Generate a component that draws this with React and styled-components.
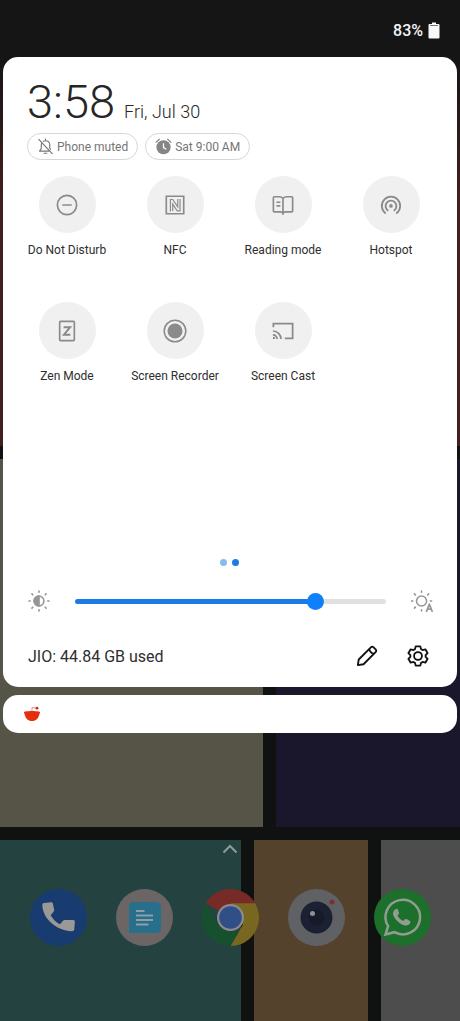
import React, { useState } from "react";
import styled, { createGlobalStyle } from "styled-components";

const Global = createGlobalStyle`
  *, *::before, *::after { box-sizing: border-box; }
  body { margin: 0; background: #141414; font-family: Roboto, "Noto Sans", sans-serif; color: #2e2e2e; }
  svg { display: block; }
`;

const PlainButton = styled.button`
  margin: 0;
  padding: 0;
  border: 0;
  background: none;
  color: inherit;
  font: inherit;
  cursor: pointer;
`;

const Screen = styled.div`
  display: grid;
  grid-template: minmax(100vh, auto) / minmax(0, 1fr);
`;

const Layer = styled.div`
  grid-area: 1 / 1;
  display: flex;
  flex-direction: column;
`;

const Wallpaper = styled.div`
  grid-area: 1 / 1;
  display: grid;
  grid-template-rows: 446fr 368fr 181fr;
  gap: 13px;
  background: #101111;
`;

const WallRow = styled.div`
  display: grid;
  grid-template-columns: ${(p) => p.$columns};
  gap: 13px;
`;

const WallTile = styled.div`
  background: ${(p) => p.$fill};
`;

const StatusBar = styled.header`
  display: flex;
  justify-content: flex-end;
  align-items: center;
  gap: 5px;
  height: 57px;
  padding: 4px 20px 0 0;
  color: #f4f4f4;
  font-size: 16px;
  font-weight: 500;
`;

const Panel = styled.main`
  margin: 0 3px;
  padding: 20px 12px 13px 10px;
  border-radius: 15px;
  background: #fff;
`;

const Clock = styled.div`
  display: flex;
  align-items: baseline;
  gap: 9px;
  height: 56px;
  padding-left: 14px;
  color: #262626;
  font-weight: 300;
`;

const Time = styled.time`
  font-size: 47px;
  line-height: 50px;
`;

const DateText = styled.span`
  font-size: 18px;
`;

const Pills = styled.div`
  display: flex;
  gap: 7px;
  padding-left: 14px;
`;

const Pill = styled(PlainButton)`
  display: flex;
  align-items: center;
  gap: 3px;
  height: 27px;
  padding: 0 9px;
  border: 1px solid #d6d6d6;
  border-radius: 14px;
  color: #757575;
  font-size: 12px;
`;

const Tiles = styled.div`
  display: grid;
  grid-template-columns: repeat(4, 1fr);
  grid-auto-rows: 126px;
  align-content: start;
  min-height: 397px;
  padding-top: 16px;
`;

const Tile = styled(PlainButton)`
  display: flex;
  flex-direction: column;
  align-items: center;
  gap: 9px;
  font-size: 12px;
  line-height: 16px;
`;

const TileDisc = styled.span`
  display: grid;
  place-items: center;
  width: 57px;
  height: 57px;
  border-radius: 50%;
  background: #f0f0f0;
  color: #8a8a8a;
`;

const Dots = styled.div`
  display: flex;
  justify-content: center;
  gap: 5px;
  padding-top: 2px;
`;

const Dot = styled.span`
  width: 7px;
  height: 7px;
  border-radius: 50%;
  background: ${(p) => (p.$on ? "#1a7be0" : "#84bdec")};
`;

const BrightnessRow = styled.div`
  display: flex;
  align-items: center;
  height: 36px;
  margin-top: 17px;
  padding: 0 12px 0 15px;
  color: #969696;
`;

const Slider = styled.input`
  flex: 1;
  min-width: 0;
  height: 17px;
  margin: 0 25px;
  appearance: none;
  background: transparent;
  &::-webkit-slider-runnable-track {
    height: 5px;
    border-radius: 3px;
    background: linear-gradient(to right, #1a7be6 var(--fill), #e0e0e0 var(--fill));
  }
  &::-webkit-slider-thumb {
    appearance: none;
    width: 17px;
    height: 17px;
    margin-top: -6px;
    border-radius: 50%;
    background: #0d80fa;
  }
`;

const Footer = styled.footer`
  display: flex;
  align-items: center;
  gap: 29px;
  height: 36px;
  margin-top: 19px;
  padding: 0 16px 0 15px;
  color: #111;
`;

const Usage = styled.span`
  flex: 1;
  font-size: 16px;
  color: #2e2e2e;
`;

const Notification = styled.section`
  display: flex;
  align-items: center;
  height: 38px;
  margin: 8px 3px 0;
  padding-left: 20px;
  border-radius: 15px;
  background: #fff;
`;

const Dock = styled.nav`
  display: grid;
  grid-template-columns: repeat(5, 1fr);
  justify-items: center;
  margin-top: auto;
  padding: 0 15px 75px;
`;

const DrawerButton = styled(PlainButton)`
  grid-column: 1 / -1;
  margin-bottom: 35px;
  color: #8f9c9a;
`;

const Line = ({ size = 22, w = 2, children }) => (
  <svg width={size} height={size} viewBox="0 0 24 24" fill="none" stroke="currentColor" strokeWidth={w} strokeLinejoin="round" strokeLinecap="round" aria-hidden="true">
    {children}
  </svg>
);

const tiles = [
  ["Do Not Disturb", <Line key="d" w={1.8}><circle cx="12" cy="12" r="10.5" /><path d="M7.5 12h9" /></Line>],
  ["NFC", <Line key="n" w={1.8}><path d="M2.5 2.5h19v19h-19z" strokeLinejoin="miter" /><path d="M7 19V6h2.500l5.500 8V5.500M9.500 18.500V11l5 7.500h3V5.500" strokeWidth="1.300" strokeLinejoin="miter" strokeLinecap="butt" /></Line>],
  ["Reading mode", <Line key="r" w={1.8}><path d="M12 5C11 3.500 9.500 3 8 3H2.500a1 1 0 0 0-1 1v14.500a1 1 0 0 0 1 1H9c1.500 0 2.500.3 3 1.500.5-1.200 1.500-1.500 3-1.500h6.500a1 1 0 0 0 1-1V4a1 1 0 0 0-1-1H16C14.500 3 13 3.500 12 5zM12 5v17M5.500 9h3M5.500 13h3" /></Line>],
  ["Hotspot", <Line key="h" w={2}><circle cx="12" cy="13" r="2" fill="currentColor" stroke="none" /><path d="M5.700 20.700a10 10 0 1 1 12.600 0M8.300 17.800a5.900 5.900 0 1 1 7.400 0" /></Line>],
  ["Zen Mode", <Line key="z" w={1.8}><rect x="4" y="1.500" width="16" height="21" rx="1" /><path d="M8.300 8h7l-6.600 8h7" strokeWidth="2.200" strokeLinejoin="miter" strokeLinecap="butt" /></Line>],
  ["Screen Recorder", <Line key="s" size={24} w={1.5}><circle cx="12" cy="12" r="10.800" /><circle cx="12" cy="12" r="7.500" fill="currentColor" stroke="none" /></Line>],
  ["Screen Cast", <Line key="c" w={1.9}><path d="M1.500 8V4h21v16H14M1 16.200a4.600 4.600 0 0 1 4.600 4.600M1 12a8.800 8.800 0 0 1 8.800 8.800" strokeLinejoin="miter" strokeLinecap="butt" /><path d="M1 18.300a2.500 2.500 0 0 1 2.500 2.500H1z" fill="currentColor" stroke="none" /></Line>],
];

const BellOff = () => (
  <Line size={17} w={1.6}>
    <path d="M6.500 7.500C5.800 9 6 11 6 15l-2.500 3.500H17M9 4.800c1-.8 1.500-1 3-1 3.500 0 6 2.500 6 6V14l1 2M10 21.500h4M12 1.500v2M2.500 2l19 20" />
  </Line>
);

const Alarm = () => (
  <svg width="17" height="17" viewBox="0 0 24 24" fill="none" aria-hidden="true">
    <circle cx="12" cy="13" r="10" fill="#858585" />
    <path d="M1 6.500 6.500 1.500M23 6.500 17.500 1.500" stroke="#858585" strokeWidth="1.800" />
    <path d="M12 7.500v6l4 2.500" stroke="#fff" strokeWidth="1.800" />
  </svg>
);

const rays = [0, 45, 90, 135, 180, 225, 270, 315];

const SunLow = () => (
  <Line w={1.800}>
    <circle cx="12" cy="12" r="5.300" />
    <path d="M12 6.700a5.300 5.300 0 0 0 0 10.600z" fill="currentColor" />
    {rays.map((a) => <path key={a} d="M12 1.100v1.300" transform={`rotate(${a} 12 12)`} />)}
  </Line>
);

const SunAuto = () => (
  <Line w={1.700}>
    <circle cx="11.500" cy="12" r="5.500" />
    {rays.filter((a) => a !== 135).map((a) => <path key={a} d="M11.500 1v1.500" transform={`rotate(${a} 11.500 12)`} />)}
    <path d="M17 23l3-7.500 3 7.500M18 20.800h4" strokeWidth="1.900" />
  </Line>
);

const Battery = () => (
  <svg width="12" height="17" viewBox="0 0 12 17" aria-hidden="true">
    <path d="M4 .5h4v1.500h2.500a1 1 0 0 1 1 1V15.500a1 1 0 0 1-1 1h-9a1 1 0 0 1-1-1V3a1 1 0 0 1 1-1H4z" fill="#f8f8f8" />
    <path d="M2 3.500h8" stroke="#777" />
  </svg>
);

const Pencil = () => (
  <Line w={2}>
    <path d="M2 22l1-6.200L16.200 2.600c1-1 2-1 3 0l2.200 2.200c1 1 1 2 0 3L8.200 21zM14.500 4.500c.5 2.500 2.500 4.500 5 5" />
  </Line>
);

const Gear = () => (
  <Line w={2}>
    <circle cx="12" cy="12" r="4.300" />
    <path d="M9.500 1.500h5l.8 3 1.700 1 3-.8 2.500 4.200-2.200 2.200v1.800l2.200 2.200-2.500 4.200-3-.8-1.700 1-.8 3h-5l-.8-3-1.700-1-3 .8-2.500-4.200 2.200-2.200v-1.800L1.500 8.900 4 4.700l3 .8 1.700-1z" />
  </Line>
);

const Reddit = () => (
  <svg width="18" height="16" viewBox="0 0 18 16" aria-hidden="true">
    <path d="M2.500 5.500C5 4.700 13 4.700 15.500 5.500c1.600-.2 2.100 1.300 1 2.200C15.500 12.500 13 15 9 15S2.500 12.500 1.500 7.700C.4 6.800.9 5.300 2.500 5.500z" fill="#e5300f" />
    <path d="M9 5V1.500l4 .6" stroke="#d8988c" strokeWidth="1" fill="none" />
    <circle cx="14" cy="2.200" r="1.400" fill="#d02a24" />
    <path d="M5.500 8h1M11 8h1" stroke="#b8240c" />
  </svg>
);

const AppSvg = ({ children }) => <svg width="57" height="57" viewBox="0 0 57 57" fill="none" aria-hidden="true">{children}</svg>;

const apps = [
  ["Phone", <AppSvg key="p">
    <circle cx="28.500" cy="28.500" r="28.500" fill="#193c70" />
    <path d="M14 14l7-.8c1 0 1.700.5 1.900 1.500l1.200 5.800c.2 1 0 1.600-.6 2.300l-2.800 3.400c2.600 4.300 4.800 6.500 9.300 9.100l2.800-3.400c.6-.7 1.200-1 2.100-1h8.100c1.200 0 2 .8 1.900 2l-.6 7.100c-.2 1.500-1 2.300-2.500 2.200C26.500 41.500 12.800 30 12.300 16c0-1.100.6-1.900 1.700-2z" fill="#9b9997" />
  </AppSvg>],
  ["Messages", <AppSvg key="m">
    <circle cx="28.500" cy="28.500" r="28.500" fill="#6b6565" />
    <path d="M17.500 13h22.500c3 0 5 2 5 5v21c0 3-2 5-5 5H13V17.500c0-3 1.500-4.500 4.500-4.500z" fill="#286f8b" />
    <path d="M20 22h8.500M20 26.500h17M20 31h17M20 35.500h12.500" stroke="#8ba0a8" strokeWidth="2" />
  </AppSvg>],
  ["Chrome", <AppSvg key="c">
    <path d="M28.500 28.500 3.800 14.200A28.500 28.500 0 0 1 53.200 14.200z" fill="#782b26" />
    <path d="M28.500 14.200h24.700A28.500 28.500 0 0 1 28.500 57L40.900 35.600z" fill="#78671e" />
    <path d="M3.800 14.200 16.100 35.600 28.500 42.800h8.300L28.500 57A28.500 28.500 0 0 1 3.800 14.200z" fill="#17502f" />
    <circle cx="28.500" cy="28.500" r="13.500" fill="#8b8b8f" />
    <circle cx="28.500" cy="28.500" r="11.300" fill="#304f87" />
  </AppSvg>],
  ["Camera", <AppSvg key="k">
    <circle cx="28.500" cy="28.500" r="28.500" fill="#606164" />
    <circle cx="28.500" cy="28.500" r="16" fill="#1b2032" />
    <circle cx="28.500" cy="28.500" r="8" fill="#171b29" />
    <circle cx="24.500" cy="24.500" r="2.500" fill="#8d8f99" />
    <circle cx="44" cy="13" r="2.500" fill="#743337" />
  </AppSvg>],
  ["WhatsApp", <AppSvg key="w">
    <circle cx="28.500" cy="28.500" r="28.500" fill="#1d702b" />
    <path d="M11.500 45.500l2.600-8.300a17.300 17.300 0 1 1 6.300 6z" stroke="#929d91" strokeWidth="2.500" />
    <path d="M21 20.500c-3.500 3-2 7 2 11.200 4.500 4.500 9.300 6.300 12.500 3.300 1-1 1.200-2.300.5-2.900l-3.600-2c-.8-.4-1.300-.2-1.800.4l-1.300 1.600c-2.700-1.100-4.600-3-5.800-5.500l1.200-1.600c.5-.6.5-1 .2-1.700l-1.300-3c-.4-.8-1.500-.6-2.600.2z" fill="#929d91" />
  </AppSvg>],
];

export default function App() {
  const [level, setLevel] = useState(79);
  return (
    <Screen>
      <Global />
      <Wallpaper aria-hidden="true">
        <WallRow $columns="1fr">
          <WallTile $fill="linear-gradient(#151515 57px, #401f1e 190px, #401f1e)" />
        </WallRow>
        <WallRow $columns="263fr 184fr">
          <WallTile $fill="#565347" />
          <WallTile $fill="#1a172c" />
        </WallRow>
        <WallRow $columns="241fr 114fr 79fr">
          <WallTile $fill="#244240" />
          <WallTile $fill="#54422d" />
          <WallTile $fill="#4d4d4d" />
        </WallRow>
      </Wallpaper>
      <Layer>
        <StatusBar>83%<Battery /></StatusBar>
        <Panel>
          <Clock>
            <Time>3:58</Time>
            <DateText>Fri, Jul 30</DateText>
          </Clock>
          <Pills>
            <Pill><BellOff />Phone muted</Pill>
            <Pill><Alarm />Sat 9:00 AM</Pill>
          </Pills>
          <Tiles>
            {tiles.map(([name, icon]) => (
              <Tile key={name}><TileDisc>{icon}</TileDisc>{name}</Tile>
            ))}
          </Tiles>
          <Dots><Dot /><Dot $on /></Dots>
          <BrightnessRow>
            <SunLow />
            <Slider type="range" aria-label="Brightness" min="0" max="100" value={level}
              onChange={(e) => setLevel(Number(e.target.value))} style={{ "--fill": `${level}%` }} />
            <PlainButton aria-label="Automatic brightness"><SunAuto /></PlainButton>
          </BrightnessRow>
          <Footer>
            <Usage>JIO: 44.84 GB used</Usage>
            <PlainButton aria-label="Edit tiles"><Pencil /></PlainButton>
            <PlainButton aria-label="Settings"><Gear /></PlainButton>
          </Footer>
        </Panel>
        <Notification aria-label="Reddit"><Reddit /></Notification>
        <Dock>
          <DrawerButton aria-label="All apps">
            <svg width="16" height="10" viewBox="0 0 16 10" fill="none" stroke="currentColor" strokeWidth="2"><path d="M1.500 8.500 8 2l6.500 6.500" /></svg>
          </DrawerButton>
          {apps.map(([name, icon]) => <PlainButton key={name} aria-label={name}>{icon}</PlainButton>)}
        </Dock>
      </Layer>
    </Screen>
  );
}
